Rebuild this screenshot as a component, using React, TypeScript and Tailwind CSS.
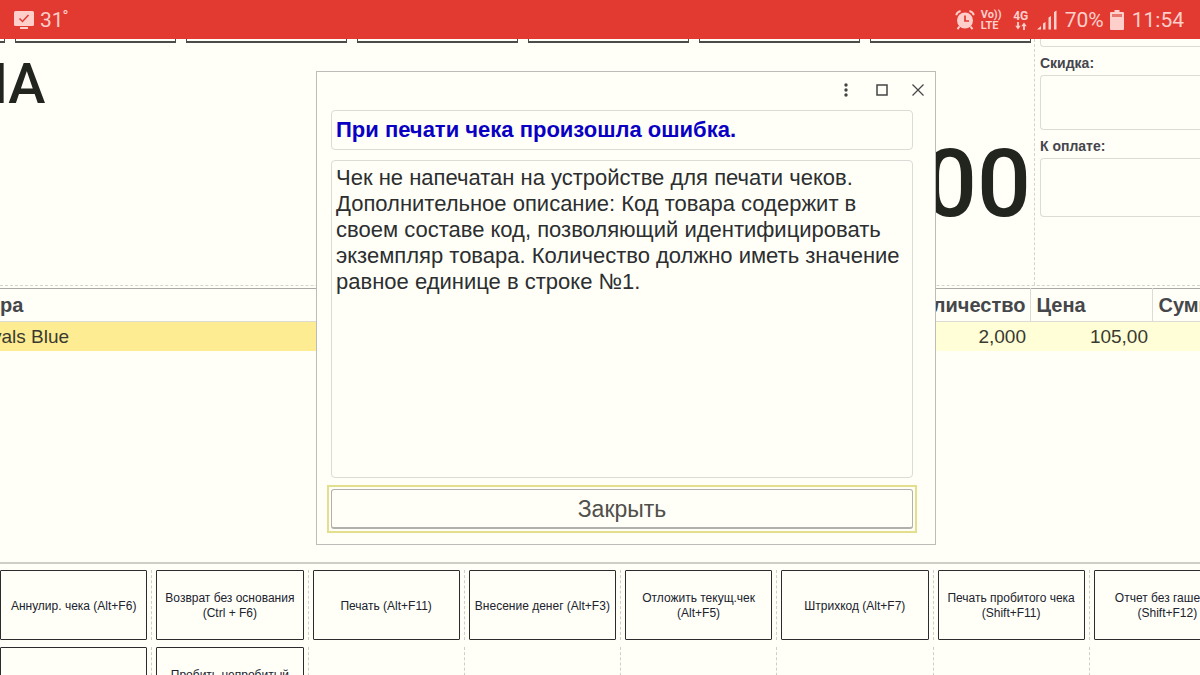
import React from "react";

type Action = { title: string; keys?: string };

const firstRow: Action[] = [
  { title: "Аннулир. чека (Alt+F6)" },
  { title: "Возврат без основания", keys: "(Ctrl + F6)" },
  { title: "Печать (Alt+F11)" },
  { title: "Внесение денег (Alt+F3)" },
  { title: "Отложить текущ.чек", keys: "(Alt+F5)" },
  { title: "Штрихкод (Alt+F7)" },
  { title: "Печать пробитого чека", keys: "(Shift+F11)" },
  { title: "Отчет без гашения", keys: "(Shift+F12)" },
];

const secondRow: (Action | null)[] = [
  { title: "" },
  { title: "Пробить непробитый", keys: "чек" },
  null,
  null,
  null,
  null,
  null,
  null,
];

function StatusBar() {
  return (
    <header className="flex h-[39px] shrink-0 items-center bg-[#e23a31] pr-4 pl-3.5 font-['Roboto',sans-serif] text-[#ffcfcb]">
      <svg width="20" height="20" viewBox="0 0 20 20" aria-hidden="true">
        <rect x="0" y="1" width="20" height="15" rx="1.5" fill="#ffcfcb" />
        <rect x="6" y="17" width="8" height="2" fill="#ffcfcb" />
        <path d="M5.5 8.5l3 3 6-6.5" fill="none" stroke="#e23a31" strokeWidth="1.5" />
      </svg>
      <span className="ml-1.5 text-[21px] leading-6">31</span>
      <span className="-ml-px mb-1.5 text-base leading-4">°</span>

      <div className="ml-auto flex items-center">
        <svg width="20" height="22" viewBox="0 0 20 22" aria-hidden="true">
          <circle cx="10" cy="11.5" r="8" fill="#ffcfcb" />
          <path d="M1.2 6.2Q2 2.8 5.6 2M18.8 6.2Q18 2.8 14.4 2" fill="none" stroke="#ffcfcb" strokeWidth="1.8" />
          <path d="M4.5 17.5l-2 2.6M15.5 17.5l2 2.6" stroke="#ffcfcb" strokeWidth="2" />
          <path d="M10 6.5v5.5h4" fill="none" stroke="#e23a31" strokeWidth="1.7" />
        </svg>
        <span className="ml-1.5 flex w-[22px] flex-col text-[11px] leading-[11px] font-bold">
          <span className="whitespace-nowrap">Vo))</span>
          <span>LTE</span>
        </span>
        <span className="ml-2.5 flex w-4 flex-col items-center text-xs leading-3 font-bold">
          4G
          <svg width="12" height="8" viewBox="0 0 12 8" aria-hidden="true">
            <path d="M3 0v4M9 8V4" stroke="#ffcfcb" strokeWidth="1.8" />
            <path d="M.3 3.8h5.4L3 7.5zM6.3 4.2h5.4L9 .5z" fill="#ffcfcb" />
          </svg>
        </span>
        <svg className="ml-2" width="20" height="20" viewBox="0 0 20 20" fill="#ffcfcb" aria-hidden="true">
          <path d="M0 19.5h4V16zM6 13.5L8.5 12v7.5H6zM11.5 7.5L14 6v13.5h-2.5zM17 2L19.5.5v19H17z" />
        </svg>
        <span className="ml-2 text-[21px] leading-6">70%</span>
        <svg className="ml-1.5" width="14" height="20" viewBox="0 0 14 20" aria-hidden="true">
          <path d="M4.5 0h5v2H13a1 1 0 0 1 1 1v16a1 1 0 0 1-1 1H1a1 1 0 0 1-1-1V3a1 1 0 0 1 1-1h3.5z" fill="#ffcfcb" />
          <rect x="2" y="4" width="10" height="3" fill="#e8776f" />
        </svg>
        <span className="ml-2 text-[21px] leading-6">11:54</span>
      </div>
    </header>
  );
}

function Totals() {
  return (
    <aside className="flex w-[165px] shrink-0 flex-col pl-[5px] text-sm leading-5 font-bold text-[#45454d]">
      <div className="h-2 rounded-bl border-b border-l border-[#dcdcd6]" />
      <label htmlFor="discount" className="mt-1.5">
        Скидка:
      </label>
      <input id="discount" readOnly className="mt-0.5 h-[55px] w-full rounded-l border border-r-0 border-[#dcdcd6] px-2" />
      <label htmlFor="due" className="mt-1.5">
        К оплате:
      </label>
      <input id="due" readOnly className="mt-0.5 h-[59px] w-full rounded-l border border-r-0 border-[#dcdcd6] px-2" />
    </aside>
  );
}

function Summary() {
  return (
    <section className="flex h-[247px] shrink-0 border-b border-dashed border-[#d4d4cc]">
      <div className="flex min-w-0 flex-1 flex-col overflow-hidden border-r border-dashed border-[#d4d4cc] pr-[3px]">
        <div className="flex h-1 justify-end gap-2.5">
          {[0, 1, 2, 3, 4, 5, 6].map((i) => (
            <div key={i} className="w-[161px] shrink-0 border-x border-b-2 border-[#4c4c4a]" />
          ))}
        </div>
        <div className="-ml-8 pt-2 font-['Roboto',sans-serif] text-[56px] leading-[66px] font-medium text-[#22241e]">
          НА
        </div>
        <div className="text-right font-['Roboto',sans-serif] text-[95px] leading-[134px] font-medium text-[#22241e]">
          00
        </div>
      </div>
      <Totals />
    </section>
  );
}

function Goods() {
  return (
    <table className="mt-0.5 w-full table-fixed border-collapse border-t border-[#a9aaa6] text-[19px] leading-6">
      <colgroup>
        <col />
        <col className="w-[200px]" />
        <col className="w-[122px]" />
        <col className="w-[48px]" />
      </colgroup>
      <thead>
        <tr className="h-[33px] border-b border-[#dcdcd4] text-[20px] text-[#45474a]">
          <th className="p-0 text-left">ра</th>
          <th className="border-r border-[#dcdcd4] p-0 pr-1 text-right">Количество</th>
          <th className="border-r border-[#dcdcd4] p-0 pl-1.5 text-left">Цена</th>
          <th className="overflow-hidden p-0 pl-1.5 text-left whitespace-nowrap">Сумма</th>
        </tr>
      </thead>
      <tbody>
        <tr className="h-[29px] text-[#3a3a30]">
          <td className="bg-[#fdec92] p-0 pt-0.5 -indent-2 whitespace-nowrap">vals Blue</td>
          <td className="bg-[#fffed6] p-0 pt-0.5 pr-1 text-right">2,000</td>
          <td className="bg-[#fffed6] p-0 pt-0.5 pr-1 text-right">105,00</td>
          <td className="bg-[#fffed6] p-0" />
        </tr>
      </tbody>
    </table>
  );
}

function ActionCell({ action }: { action: Action | null }) {
  return (
    <div className="flex h-[70px] min-w-0">
      {action ? (
        <button
          type="button"
          aria-label={action.title ? undefined : "Действие"}
          className="flex min-w-0 flex-1 flex-col items-center justify-center rounded-[1px] border border-[#2c2c2c] pt-0.5 text-xs leading-[15px] whitespace-nowrap text-[#20222e]"
        >
          <span>{action.title}</span>
          {action.keys && <span>{action.keys}</span>}
        </button>
      ) : (
        <div className="flex-1" />
      )}
      <div className="flex w-[9px] justify-center">
        <div className="border-l border-dashed border-[#cfcfc8]" />
      </div>
    </div>
  );
}

function Actions() {
  return (
    <section className="h-[113px] shrink-0 overflow-hidden border-t-2 border-[#cfcfca] pt-1.5">
      <div className="grid w-[calc(100%+50px)] grid-cols-8 gap-y-[7px]">
        {[...firstRow, ...secondRow].map((action, i) => (
          <ActionCell key={i} action={action} />
        ))}
      </div>
    </section>
  );
}

function ErrorDialog() {
  return (
    <div className="absolute inset-x-0 top-[71px] flex justify-center pl-[52px]">
      <div
        role="dialog"
        aria-labelledby="error-title"
        className="flex w-[620px] flex-col border border-[#bcbcb8] bg-[#fffff8] px-2.5 pb-[11px]"
      >
        <div className="-mr-[5px] flex h-[38px] items-start justify-end gap-3 pt-1.5 text-[#444]">
          <button type="button" aria-label="Меню" className="flex size-6 items-center justify-center">
            <svg width="4" height="14" viewBox="0 0 4 14" fill="currentColor">
              <circle cx="2" cy="2" r="1.7" />
              <circle cx="2" cy="7" r="1.7" />
              <circle cx="2" cy="12" r="1.7" />
            </svg>
          </button>
          <button type="button" aria-label="Развернуть" className="flex size-6 items-center justify-center">
            <svg width="12" height="12" viewBox="0 0 12 12" fill="none" stroke="currentColor" strokeWidth="1.5">
              <rect x="1" y="1" width="10" height="10" />
            </svg>
          </button>
          <button type="button" aria-label="Закрыть окно" className="flex size-6 items-center justify-center">
            <svg width="12" height="12" viewBox="0 0 12 12" stroke="currentColor" strokeWidth="1.2">
              <path d="M.5.5l11 11M11.5.5l-11 11" />
            </svg>
          </button>
        </div>
        <h1
          id="error-title"
          className="mr-3 ml-1 flex h-10 items-center rounded border border-[#dcdcd6] px-1 text-[22px] leading-7 font-bold text-[#0a00c4]"
        >
          При печати чека произошла ошибка.
        </h1>
        <div className="mt-2.5 mr-3 ml-1 h-[318px] rounded border border-[#dcdcd6] px-1 pt-1 text-[22px] leading-[26px] text-[#2c2e30]">
          <p>Чек не напечатан на устройстве для печати чеков.</p>
          <p>
            Дополнительное описание: Код товара содержит в своем составе код, позволяющий идентифицировать экземпляр
            товара. Количество должно иметь значение равное единице в строке №1.
          </p>
        </div>
        <div className="mt-[7px] mr-2 border-2 border-[#e3df8c] p-0.5">
          <button
            type="button"
            className="block h-10 w-full rounded-[3px] border border-b-2 border-[#b0b0ac] text-[23px] leading-7 text-[#50504a]"
          >
            Закрыть
          </button>
        </div>
      </div>
    </div>
  );
}

export default function App() {
  return (
    <div className="relative flex h-screen flex-col overflow-hidden bg-[#fffff8] font-['Liberation_Sans',Arial,sans-serif]">
      <StatusBar />
      <main className="flex min-h-0 flex-1 flex-col">
        <Summary />
        <Goods />
        <div className="flex-1" />
        <Actions />
      </main>
      <ErrorDialog />
    </div>
  );
}
